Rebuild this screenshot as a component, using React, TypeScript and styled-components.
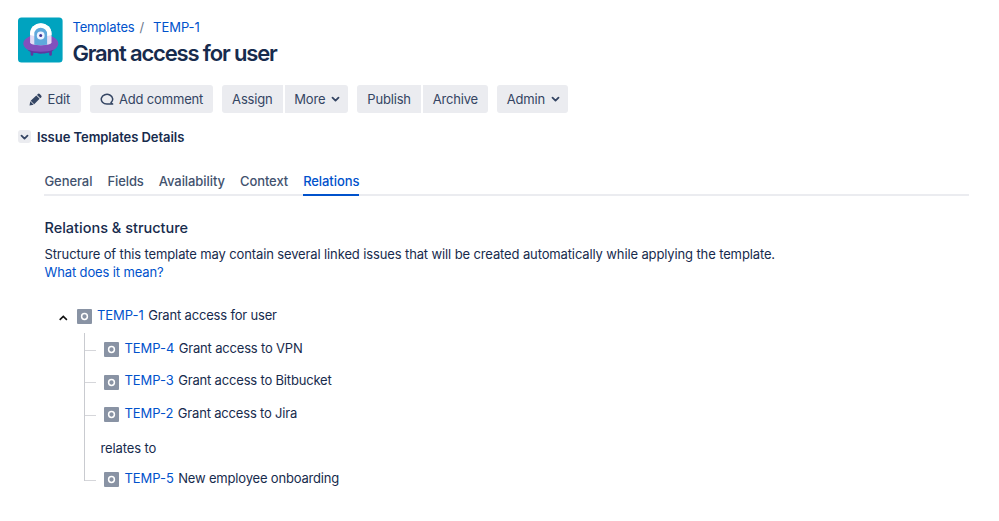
import React from 'react';
import styled, { createGlobalStyle } from 'styled-components';

const GlobalStyle = createGlobalStyle`
    * {
        box-sizing: border-box;
    }

    body {
        margin: 0;
        background: #fff;
        color: #172b4d;
        font-family: Inter, "Liberation Sans", sans-serif;
        font-size: 13px;
        line-height: 18px;
        letter-spacing: -0.125px;
    }

    h1, h2, h3, p, ul {
        margin: 0;
        padding: 0;
    }

    svg {
        display: block;
        flex: none;
    }
`

const Page = styled.main`
    width: 999px;
    height: 521px;
    padding: 17px 30px 0 18.4px;
    overflow: hidden;
`

const IssueHeader = styled.header`
    display: flex;
    gap: 9px;
    height: 46px;
`

const Breadcrumbs = styled.nav`
    display: flex;
    height: 21px;
    padding-top: 1px;
    color: #6b778c;
`

const Separator = styled.span`
    width: 18.5px;
    padding-left: 5px;
`

const Link = styled.a`
    color: #0052cc;
    text-decoration: none;
    white-space: nowrap;
`

const Title = styled.h1`
    font-size: 22px;
    font-weight: 600;
    line-height: 30px;
    letter-spacing: -1.15px;
    white-space: nowrap;
`

const Toolbar = styled.div`
    display: flex;
    gap: 9px;
    height: 28px;
    margin-top: 22.4px;
`

const ButtonGroup = styled.div`
    display: flex;
    gap: 2px;
`

const Button = styled.button<{ $width: number }>`
    display: flex;
    align-items: center;
    justify-content: center;
    gap: 5px;
    width: ${({ $width }) => $width}px;
    height: 28px;
    padding: 0;
    border: 0;
    border-radius: 3px;
    background: #ebecf0;
    color: #344563;
    font: inherit;
    letter-spacing: -0.17px;
    white-space: nowrap;

    ${ButtonGroup} &:not(:first-child) {
        border-top-left-radius: 0;
        border-bottom-left-radius: 0;
    }

    ${ButtonGroup} &:not(:last-child) {
        border-top-right-radius: 0;
        border-bottom-right-radius: 0;
    }
`

const MenuButton = styled(Button)`
    gap: 6px;
    padding-left: 2px;
`

const SectionHeader = styled.div`
    display: flex;
    align-items: center;
    gap: 5.6px;
    height: 18px;
    margin-top: 14.6px;
`

const Toggle = styled.span`
    display: flex;
    align-items: center;
    justify-content: center;
    width: 13px;
    height: 13px;
    border-radius: 3px;
    background: #ebecf0;
    color: #344563;
`

const SectionTitle = styled.h2`
    font-size: 13px;
    font-weight: 600;
    letter-spacing: -0.05px;
    white-space: nowrap;
`

const Content = styled.section`
    margin: 26px 0 0 26.1px;
`

const Tabs = styled.div`
    display: flex;
    gap: 15px;
    height: 24px;
    border-bottom: 2px solid #ebecf0;
`

const Tab = styled.span<{ $active?: boolean }>`
    height: 24px;
    border-bottom: 2px solid ${({ $active }) => ($active ? '#0052cc' : 'transparent')};
    color: ${({ $active }) => ($active ? '#0052cc' : '#42526e')};
    font-weight: 500;
    letter-spacing: -0.08px;
    white-space: nowrap;
`

const Heading = styled.h3`
    margin-top: 22px;
    font-size: 14.5px;
    font-weight: 500;
    line-height: 20px;
    letter-spacing: 0;
`

const Description = styled.p`
    margin-top: 7px;
    white-space: nowrap;
`

const Tree = styled.div`
    margin: 25px 0 0 12.5px;
`

const TreeRoot = styled.div`
    display: flex;
    align-items: center;
    height: 20px;
`

const Expander = styled.span`
    width: 20px;
    padding: 4px 0 0 1.6px;
    color: #111;
`

const Children = styled.ul`
    list-style: none;
    margin: 7px 0 0 27.5px;
`

const Child = styled.li`
    display: flex;
    align-items: flex-start;
    height: 32.4px;
`

const Rail = styled.span<{ $last?: boolean }>`
    width: 1px;
    height: ${({ $last }) => ($last ? '18px' : '100%')};
    background: #c9cbd0;
`

const Branch = styled.span<{ $open?: boolean }>`
    width: 11px;
    height: 18px;
    border-bottom: 1px solid ${({ $open }) => ($open ? 'transparent' : '#d5d6da')};
`

const Issue = styled.span`
    display: flex;
    height: 20px;
    letter-spacing: -0.18px;
    white-space: nowrap;

    ${Child} & {
        margin: 6px 0 0 8px;
    }
`

const TypeIcon = styled.span`
    display: flex;
    align-items: center;
    justify-content: center;
    width: 15px;
    height: 15px;
    margin: 3.4px 5px 0 0;
    border-radius: 1px;
    background: #8993a4;
`

const IssueKey = styled(Link)`
    letter-spacing: -0.05px;
`

const Summary = styled.span`
    margin-left: 4.5px;
`

const Relation = styled.span`
    padding: 8.4px 0 0 4px;
`

const Avatar = () => (
    <svg width="45" height="46" viewBox="0 0 45 46">
        <rect x="0" y="0.6" width="44.6" height="44.8" rx="3.5" fill="#00a3bf" />
        <path d="M12.6 33h2.7v4.5a1.35 1.35 0 0 1-2.7 0zM31.2 33h2.7v4.5a1.35 1.35 0 0 1-2.7 0z" fill="#5e38a0" />
        <ellipse cx="22.8" cy="26.5" rx="17.5" ry="9.3" fill="#8250bd" />
        <path d="M9.500 32.8C16 35.3 29.5 35.3 36 32.8C31 38 14.5 38 9.5 32.8z" fill="#5e38a0" />
        <path d="M12.1 25.5V16.5a10.7 10.2 0 0 1 21.4 0V25.5Q33 28.3 22.8 28.3T12.1 25.5z" fill="#e3dcf5" />
        <path d="M12.1 18V16.5a10.7 10.2 0 0 1 21.4 0V18Q22.8 21 12.1 18z" fill="#fff" />
        <path d="M16.3 27.8V17a6.4 6.2 0 0 1 12.8 0V27.8Q22.7 28.7 16.3 27.8z" fill="#5fa8dc" />
        <circle cx="22.7" cy="18.5" r="3.9" fill="#eef3ff" />
        <circle cx="22.7" cy="18.5" r="1.5" fill="#403294" />
    </svg>
)

const Pencil = () => (
    <svg width="13" height="13" viewBox="0 0 13 13" fill="currentColor">
        <path d="M.5 12.5l.8-4.200 3.400 3.400zM1.700 7.700l5.600-5.200 3.300 3.300-5.400 5.400zM8 1.900l.8-.8a1.400 1.400 0 0 1 2 0l1.300 1.300a1.400 1.400 0 0 1 0 2l-.8.8z" />
    </svg>
)

const Comment = () => (
    <svg width="14" height="13" viewBox="0 0 14 13" fill="none" stroke="currentColor" strokeWidth="1.5" strokeLinejoin="round">
        <path d="M7 11A5.700 4.800 0 1 1 11 9.600Q11.400 10.700 12.600 11z" />
    </svg>
)

const Circle = () => (
    <svg width="9" height="9" viewBox="0 0 9 9" fill="none" stroke="#fff" strokeWidth="1.5">
        <circle cx="4.5" cy="4.5" r="2.9" />
    </svg>
)

const Chevron = () => (
    <svg width="9" height="8" viewBox="0 0 9 8" fill="none" stroke="currentColor" strokeWidth="1.8" strokeLinecap="round" strokeLinejoin="round">
        <path d="M1.5 2.600l3 3 3-3" />
    </svg>
)

const ExpandIcon = () => (
    <svg width="9" height="8" viewBox="0 0 9 8" fill="none" stroke="currentColor" strokeWidth="1.6">
        <path d="M.7 5.800l3.600-3.400 3.600 3.400" />
    </svg>
)

const children = [
    { id: 'TEMP-4', summary: 'Grant access to VPN' },
    { id: 'TEMP-3', summary: 'Grant access to Bitbucket' },
    { id: 'TEMP-2', summary: 'Grant access to Jira' },
]

const tabs = ['General', 'Fields', 'Availability', 'Context', 'Relations']

const IssueLine = ({ id, summary }: { id: string; summary: string }) => (
    <Issue>
        <TypeIcon><Circle /></TypeIcon>
        <IssueKey>{id}</IssueKey>
        <Summary>{summary}</Summary>
    </Issue>
)

export default function App() {
    return (
        <Page>
            <GlobalStyle />
            <IssueHeader>
                <Avatar />
                <div>
                    <Breadcrumbs>
                        <Link>Templates</Link>
                        <Separator>/</Separator>
                        <IssueKey>TEMP-1</IssueKey>
                    </Breadcrumbs>
                    <Title>Grant access for user</Title>
                </div>
            </IssueHeader>
            <Toolbar>
                <Button $width={62.7}><Pencil />Edit</Button>
                <Button $width={123}><Comment />Add comment</Button>
                <ButtonGroup>
                    <Button $width={60.5}>Assign</Button>
                    <MenuButton $width={63.5}>More <Chevron /></MenuButton>
                </ButtonGroup>
                <ButtonGroup>
                    <Button $width={64}>Publish</Button>
                    <Button $width={64.5}>Archive</Button>
                </ButtonGroup>
                <MenuButton $width={71.5}>Admin <Chevron /></MenuButton>
            </Toolbar>
            <SectionHeader>
                <Toggle><Chevron /></Toggle>
                <SectionTitle>Issue Templates Details</SectionTitle>
            </SectionHeader>
            <Content>
                <Tabs>
                    {tabs.map((tab) => <Tab key={tab} $active={tab === 'Relations'}>{tab}</Tab>)}
                </Tabs>
                <Heading>Relations &amp; structure</Heading>
                <Description>
                    Structure of this template may contain several linked issues that will be created automatically while applying the template.
                    <br />
                    <Link>What does it mean?</Link>
                </Description>
                <Tree>
                    <TreeRoot>
                        <Expander><ExpandIcon /></Expander>
                        <IssueLine id="TEMP-1" summary="Grant access for user" />
                    </TreeRoot>
                    <Children>
                        {children.map((issue) => (
                            <Child key={issue.id}>
                                <Rail />
                                <Branch />
                                <IssueLine {...issue} />
                            </Child>
                        ))}
                        <Child>
                            <Rail />
                            <Branch $open />
                            <Relation>relates to</Relation>
                        </Child>
                        <Child>
                            <Rail $last />
                            <Branch />
                            <IssueLine id="TEMP-5" summary="New employee onboarding" />
                        </Child>
                    </Children>
                </Tree>
            </Content>
        </Page>
    );
}
